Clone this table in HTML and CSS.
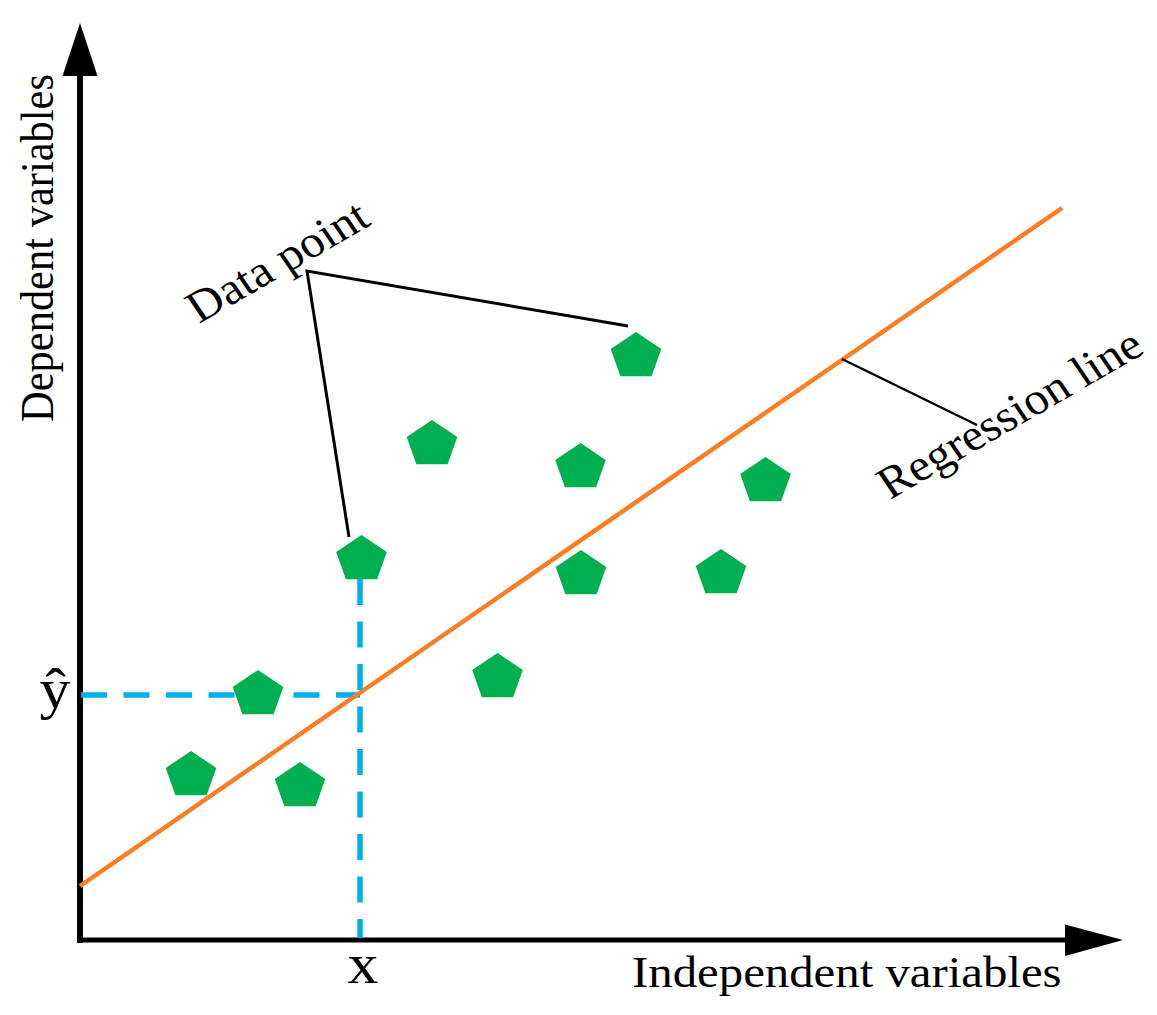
FILE: index.html
```html
<!DOCTYPE html>
<html lang="en">
<head>
<meta charset="utf-8">
<title>Linear regression diagram</title>
<link rel="stylesheet" href="styles.css">
</head>
<body>
<div class="canvas">
<svg class="chart" width="1157" height="1015" viewBox="0 0 1157 1015" xmlns="http://www.w3.org/2000/svg">
  <defs>
    <polygon id="pent" points="0,-24.5 25.3,-7.6 15.6,19.8 -15.6,19.8 -25.3,-7.6"/>
  </defs>

  <!-- axes -->
  <line class="axis axis-y" x1="80" y1="70" x2="80" y2="943"/>
  <polygon class="arrow" points="80,23 62.5,76 97.5,76"/>
  <line class="axis axis-x" x1="77" y1="940" x2="1070" y2="940"/>
  <polygon class="arrow" points="1123,940 1065,924.5 1065,956"/>

  <!-- horizontal dashed guide -->
  <line class="guide" x1="81" y1="695" x2="360" y2="695"/>

  <!-- data points -->
  <g class="points">
    <use href="#pent" x="636" y="356.5"/>
    <use href="#pent" x="432" y="444.5"/>
    <use href="#pent" x="580.5" y="467.5"/>
    <use href="#pent" x="765.5" y="481.5"/>
    <use href="#pent" x="361.5" y="559.5"/>
    <use href="#pent" x="581" y="574.5"/>
    <use href="#pent" x="721" y="573.5"/>
    <use href="#pent" x="497.5" y="677.5"/>
    <use href="#pent" x="258" y="694.5"/>
    <use href="#pent" x="191" y="775.5"/>
    <use href="#pent" x="300" y="786.5"/>
  </g>

  <!-- regression line -->
  <line class="regression" x1="80" y1="886" x2="1062" y2="208"/>

  <!-- vertical dashed guide -->
  <line class="guide" x1="360" y1="579" x2="360" y2="938"/>

  <!-- leaders -->
  <polyline class="leader" points="628,326 307,271 349,537"/>
  <line class="leader thin" x1="842" y1="359" x2="977" y2="425"/>

  <!-- labels -->
  <text class="label" font-size="42.5" transform="translate(53,422) scale(1.085,1) rotate(-90)">Dependent variables</text>
  <text class="label" font-size="45" transform="translate(632,987) scale(1.085,1)">Independent variables</text>
  <text class="label" font-size="45" transform="translate(199,324) scale(1.085,1) rotate(-32)">Data point</text>
  <text class="label" font-size="45" transform="translate(890,500) scale(1.085,1) rotate(-32)">Regression line</text>
  <text class="label mid" font-size="57" transform="translate(363,983) scale(1.085,1)">x</text>
  <text class="label mid" font-size="57" transform="translate(55,708) scale(1.085,1)">ŷ</text>
</svg>
</div>
</body>
</html>
```

FILE: styles.css
```css
html, body {
  margin: 0;
  padding: 0;
  background: #ffffff;
}

.canvas {
  width: 1157px;
  height: 1015px;
  overflow: hidden;
}

.chart {
  display: block;
}

.axis {
  stroke: #000000;
}

.axis-y {
  stroke-width: 6;
}

.axis-x {
  stroke-width: 5;
}

.arrow {
  fill: #000000;
}

.guide {
  stroke: #00b0f0;
  stroke-width: 5.5;
  stroke-dasharray: 26 16.5;
  fill: none;
}

.points {
  fill: #00b050;
}

.regression {
  stroke: #ff7c22;
  stroke-width: 4.5;
}

.leader {
  stroke: #000000;
  stroke-width: 3;
  fill: none;
}

.leader.thin {
  stroke-width: 2.5;
}

.label {
  font-family: "Liberation Serif", "Times New Roman", serif;
  fill: #000000;
}

.mid {
  text-anchor: middle;
}
```
